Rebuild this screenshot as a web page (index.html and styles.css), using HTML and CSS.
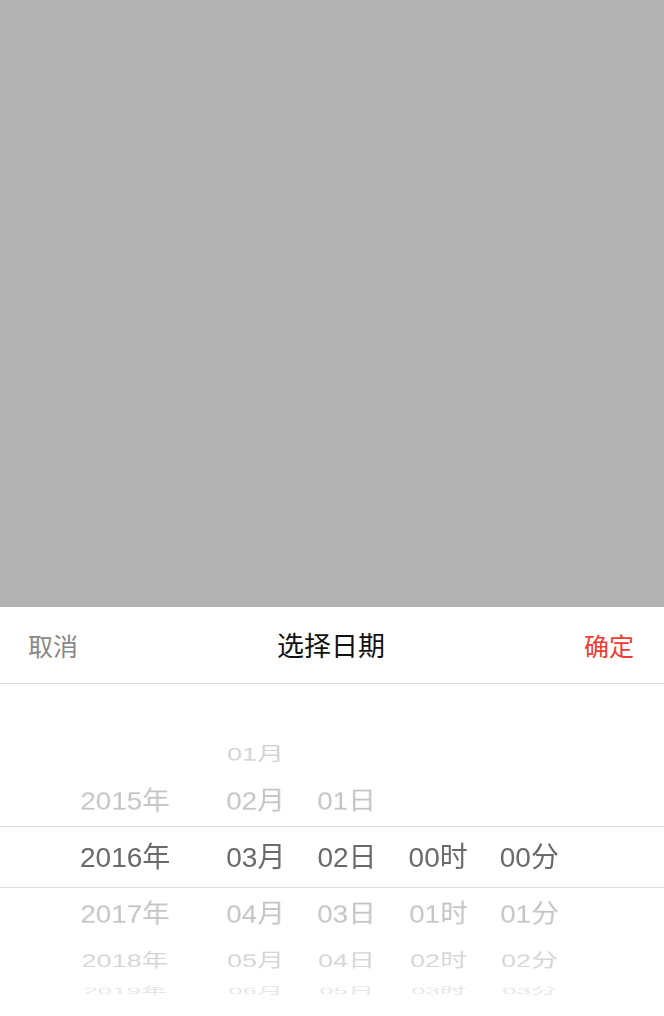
FILE: index.html
```html
<!DOCTYPE html>
<html lang="zh-CN">
<head>
<meta charset="utf-8">
<title>选择日期</title>
<link rel="stylesheet" href="styles.css">
</head>
<body>
<div class="mask"></div>
<div class="sheet">
  <div class="header">
    <span class="btn cancel">取消</span>
    <span class="title">选择日期</span>
    <span class="btn ok">确定</span>
  </div>
  <div class="picker">
    <div class="band"></div>
    <div class="cols">
      <div class="col year">
        <div class="item o-1">2015年</div>
        <div class="item o0">2016年</div>
        <div class="item o1">2017年</div>
        <div class="item o2">2018年</div>
        <div class="item o3">2019年</div>
      </div>
      <div class="col">
        <div class="item o-2">01月</div>
        <div class="item o-1">02月</div>
        <div class="item o0">03月</div>
        <div class="item o1">04月</div>
        <div class="item o2">05月</div>
        <div class="item o3">06月</div>
      </div>
      <div class="col">
        <div class="item o-1">01日</div>
        <div class="item o0">02日</div>
        <div class="item o1">03日</div>
        <div class="item o2">04日</div>
        <div class="item o3">05日</div>
      </div>
      <div class="col">
        <div class="item o0">00时</div>
        <div class="item o1">01时</div>
        <div class="item o2">02时</div>
        <div class="item o3">03时</div>
      </div>
      <div class="col">
        <div class="item o0">00分</div>
        <div class="item o1">01分</div>
        <div class="item o2">02分</div>
        <div class="item o3">03分</div>
      </div>
    </div>
  </div>
</div>
</body>
</html>
```

FILE: styles.css
```css
* { box-sizing: border-box; }
html, body { margin: 0; padding: 0; }
body {
  height: 1016px;
  display: flex;
  flex-direction: column;
  font-family: "Liberation Sans", "Noto Sans CJK SC", sans-serif;
  background: #ffffff;
  overflow: hidden;
}
.mask {
  flex: 1;
  background: #b2b2b2;
}
.sheet {
  height: 409px;
  background: #ffffff;
  display: flex;
  flex-direction: column;
}
.header {
  height: 77px;
  border-bottom: 1px solid #d6d6d6;
  display: grid;
  grid-template-columns: 1fr auto 1fr;
  align-items: center;
  padding: 0 30px 1px 28px;
}
.btn { font-size: 25px; }
.cancel { justify-self: start; color: #888888; }
.ok { justify-self: end; color: #f03a32; }
.title { font-size: 27px; color: #111111; }

.picker {
  position: relative;
  flex: 1;
  overflow: hidden;
  padding-top: 142px;
}
.band {
  position: absolute;
  left: 0;
  right: 0;
  top: 142px;
  height: 62px;
  border-top: 1px solid #dddddd;
  border-bottom: 1px solid #dddddd;
}
.cols {
  display: flex;
  padding-left: 80px;
  gap: 32px;
}
.col {
  display: grid;
  height: 62px;
  align-items: center;
  justify-items: center;
  perspective: 1000px;
  perspective-origin: 50% 50%;
}
.col.year { margin-right: 24px; }
.item {
  grid-area: 1 / 1;
  font-size: 28px;
  line-height: 32px;
  padding-top: 1px;
  white-space: nowrap;
  backface-visibility: hidden;
}
.o-2 { transform: translateZ(-167px) rotateX(40deg) translateZ(167px); color: #d3d3d3; }
.o-1 { transform: translateZ(-167px) rotateX(20deg) translateZ(167px); color: #c4c4c4; }
.o0  { color: #6a6a6a; }
.o1  { transform: translateZ(-167px) rotateX(-20deg) translateZ(167px); color: #c4c4c4; }
.o2  { transform: translateZ(-167px) rotateX(-40deg) translateZ(167px); color: #d5d5d5; }
.o3  { transform: translateZ(-167px) rotateX(-60deg) translateZ(167px); color: #e6e6e6; }
```
